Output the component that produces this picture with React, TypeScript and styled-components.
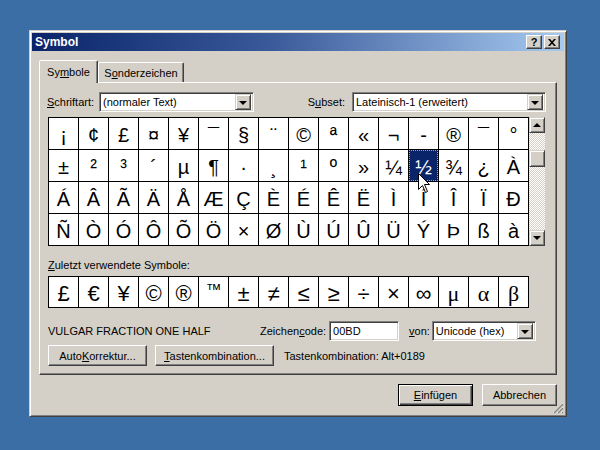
import React, { FC } from "react";
import styled, { createGlobalStyle } from "styled-components";

const GlobalStyle = createGlobalStyle`
  html, body {
    margin: 0;
    padding: 0;
  }
  body {
    width: 600px;
    height: 450px;
    overflow: hidden;
    background: #3a6ea5;
    font-family: "Liberation Sans", Arial, sans-serif;
    font-size: 11px;
    color: #000;
  }
`;

const Desktop = styled.div`
  position: relative;
  width: 600px;
  height: 450px;
  box-sizing: border-box;
  padding: 30px 0 0 29px;
`;

const Window = styled.div`
  position: relative;
  width: 538px;
  height: 387px;
  box-sizing: border-box;
  background: #d4d0c8;
  border: 1px solid;
  border-color: #d4d0c8 #404040 #404040 #d4d0c8;
  box-shadow: inset 1px 1px #fff, inset -1px -1px #808080;
  padding: 2px;
  display: flex;
  flex-direction: column;
`;

const TitleBar = styled.div`
  height: 18px;
  flex-shrink: 0;
  display: flex;
  align-items: center;
  padding: 0 4px 0 3px;
  background: linear-gradient(to right, #0a246a 0%, #3a5a9a 45%, #a6caf0 100%);
  color: #fff;
  font-weight: bold;
  font-size: 12px;
`;

const TitleText = styled.span`
  flex: 1;
`;

const CaptionButton = styled.span`
  width: 16px;
  height: 14px;
  box-sizing: border-box;
  margin-left: 2px;
  background: #d4d0c8;
  border: 1px solid;
  border-color: #fff #404040 #404040 #fff;
  box-shadow: inset -1px -1px #808080;
  display: flex;
  align-items: center;
  justify-content: center;
  color: #000;
  font-size: 11px;
  font-weight: bold;
  line-height: 1;
`;

const Body = styled.div`
  flex: 1;
  display: flex;
  flex-direction: column;
  padding: 9px 7px 0 7px;
`;

const TabStrip = styled.div`
  height: 22px;
  display: flex;
  align-items: flex-end;
`;

const Tab = styled.div<{ $active?: boolean; $w: number }>`
  position: relative;
  z-index: ${(p) => (p.$active ? 1 : 0)};
  width: ${(p) => p.$w}px;
  height: ${(p) => (p.$active ? 23 : 20)}px;
  margin-bottom: ${(p) => (p.$active ? -1 : 0)}px;
  box-sizing: border-box;
  background: #d4d0c8;
  border: 1px solid;
  border-bottom: none;
  border-color: #fff #404040 transparent #fff;
  border-radius: 2px 2px 0 0;
  box-shadow: inset -1px 0 #808080;
  display: flex;
  align-items: center;
  justify-content: center;
  padding-top: ${(p) => (p.$active ? 0 : 1)}px;
`;

const Panel = styled.div`
  height: 293px;
  box-sizing: border-box;
  border: 1px solid;
  border-color: #fff #404040 #404040 #fff;
  box-shadow: inset -1px -1px #808080;
  padding: 9px 10px 0 8px;
  display: flex;
  flex-direction: column;
`;

const Row = styled.div<{ $mt?: number; $h?: number }>`
  display: flex;
  align-items: center;
  height: ${(p) => p.$h ?? 20}px;
  margin-top: ${(p) => p.$mt ?? 0}px;
`;

const Label = styled.span<{ $w?: number; $ml?: number; $mr?: number }>`
  width: ${(p) => (p.$w ? `${p.$w}px` : "auto")};
  margin-left: ${(p) => p.$ml ?? 0}px;
  margin-right: ${(p) => p.$mr ?? 0}px;
  white-space: nowrap;
  flex-shrink: 0;
`;

const Spacer = styled.span`
  flex: 1;
`;

const U = styled.span`
  text-decoration: underline;
`;

const Field = styled.div<{ $w: number }>`
  width: ${(p) => p.$w}px;
  height: 20px;
  flex-shrink: 0;
  box-sizing: border-box;
  background: #fff;
  border: 1px solid;
  border-color: #808080 #fff #fff #808080;
  box-shadow: inset 1px 1px #404040, inset -1px -1px #d4d0c8;
  display: flex;
  align-items: center;
  padding: 2px 2px 2px 3px;
  white-space: nowrap;
  overflow: hidden;
`;

const DropButton = styled.span`
  margin-left: auto;
  width: 16px;
  height: 16px;
  flex-shrink: 0;
  box-sizing: border-box;
  background: #d4d0c8;
  border: 1px solid;
  border-color: #d4d0c8 #404040 #404040 #d4d0c8;
  box-shadow: inset 1px 1px #fff, inset -1px -1px #808080;
  display: flex;
  align-items: center;
  justify-content: center;
  &::after {
    content: "";
    border-left: 4px solid transparent;
    border-right: 4px solid transparent;
    border-top: 4px solid #000;
    margin-top: 1px;
  }
`;

const GridFrame = styled.div`
  display: flex;
  margin-top: 5px;
`;

const CharGrid = styled.div<{ $rows: number }>`
  display: grid;
  grid-template-columns: repeat(16, 29px);
  grid-template-rows: repeat(${(p) => p.$rows}, ${(p) => (p.$rows > 1 ? 31 : 30)}px);
  gap: 1px;
  background: #000;
  border: 1px solid #000;
`;

const Cell = styled.div<{ $selected?: boolean; $serif?: boolean; $size?: number }>`
  background: ${(p) => (p.$selected ? "#0a246a" : "#fff")};
  color: ${(p) => (p.$selected ? "#fff" : "#000")};
  outline: ${(p) => (p.$selected ? "1px dotted #9aa6c8" : "none")};
  outline-offset: -1px;
  display: flex;
  align-items: center;
  justify-content: center;
  padding-top: 3px;
  box-sizing: border-box;
  font-family: ${(p) =>
    p.$serif ? '"Liberation Serif", "Times New Roman", serif' : '"Liberation Sans", Arial, sans-serif'};
  font-size: ${(p) => p.$size ?? 20}px;
  line-height: 1;
`;

const Scrollbar = styled.div`
  width: 16px;
  display: flex;
  flex-direction: column;
  background: repeating-conic-gradient(#d4d0c8 0 25%, #fff 0 50%) 0 0 / 2px 2px;
`;

const ScrollButton = styled.div<{ $down?: boolean }>`
  width: 16px;
  height: 16px;
  box-sizing: border-box;
  background: #d4d0c8;
  border: 1px solid;
  border-color: #d4d0c8 #404040 #404040 #d4d0c8;
  box-shadow: inset 1px 1px #fff, inset -1px -1px #808080;
  display: flex;
  align-items: center;
  justify-content: center;
  margin-top: ${(p) => (p.$down ? "auto" : "0")};
  &::after {
    content: "";
    border-left: 4px solid transparent;
    border-right: 4px solid transparent;
    ${(p) => (p.$down ? "border-top: 4px solid #000;" : "border-bottom: 4px solid #000;")}
  }
`;

const Thumb = styled.div`
  width: 16px;
  height: 17px;
  margin-top: 17px;
  box-sizing: border-box;
  background: #d4d0c8;
  border: 1px solid;
  border-color: #d4d0c8 #404040 #404040 #d4d0c8;
  box-shadow: inset 1px 1px #fff, inset -1px -1px #808080;
`;

const SectionLabel = styled.div`
  margin-top: 13px;
  line-height: 13px;
  height: 13px;
`;

const RecentRow = styled.div`
  display: flex;
  margin-top: 4px;
`;

const Button = styled.button<{ $w: number; $h?: number; $default?: boolean }>`
  width: ${(p) => p.$w}px;
  height: ${(p) => p.$h ?? 21}px;
  flex-shrink: 0;
  box-sizing: border-box;
  padding: 0;
  font: inherit;
  color: #000;
  background: #d4d0c8;
  border: 1px solid;
  border-color: ${(p) => (p.$default ? "#000" : "#fff #404040 #404040 #fff")};
  box-shadow: ${(p) =>
    p.$default
      ? "inset 1px 1px #fff, inset -1px -1px #404040, inset -2px -2px #808080"
      : "inset -1px -1px #808080"};
`;

const Footer = styled.div`
  display: flex;
  justify-content: flex-end;
  gap: 9px;
  margin-top: 9px;
`;

const Grip = styled.svg`
  position: absolute;
  right: 2px;
  bottom: 2px;
`;

const Cursor = styled.svg`
  position: absolute;
  left: 418px;
  top: 173px;
`;

const rows = [
  ["¡", "¢", "£", "¤", "¥", "¯", "§", "¨", "©", "ª", "«", "¬", "-", "®", "¯", "°"],
  ["±", "²", "³", "´", "µ", "¶", "·", "¸", "¹", "º", "»", "¼", "½", "¾", "¿", "À"],
  ["Á", "Â", "Ã", "Ä", "Å", "Æ", "Ç", "È", "É", "Ê", "Ë", "Ì", "Í", "Î", "Ï", "Ð"],
  ["Ñ", "Ò", "Ó", "Ô", "Õ", "Ö", "×", "Ø", "Ù", "Ú", "Û", "Ü", "Ý", "Þ", "ß", "à"],
];

const recent = ["£", "€", "¥", "©", "®", "™", "±", "≠", "≤", "≥", "÷", "×", "∞", "μ", "α", "β"];
const serifRecent = ["μ", "α", "β"];

const App: FC = () => {
  return (
    <Desktop>
      <GlobalStyle />
      <Window>
        <TitleBar>
          <TitleText>Symbol</TitleText>
          <CaptionButton>?</CaptionButton>
          <CaptionButton>
            <svg width="8" height="7" viewBox="0 0 8 7">
              <path d="M0 0h2l2 2.2L6 0h2L5 3.5 8 7H6L4 4.8 2 7H0l3-3.5z" fill="#000" />
            </svg>
          </CaptionButton>
        </TitleBar>
        <Body>
          <TabStrip>
            <Tab $active $w={59}>
              <span>
                Sy<U>m</U>bole
              </span>
            </Tab>
            <Tab $w={86}>
              <span>
                S<U>o</U>nderzeichen
              </span>
            </Tab>
          </TabStrip>
          <Panel>
            <Row>
              <Label $w={52} $ml={-1}>
                <U>S</U>chriftart:
              </Label>
              <Field $w={155}>
                (normaler Text)
                <DropButton />
              </Field>
              <Spacer />
              <Label $mr={7}>
                S<U>u</U>bset:
              </Label>
              <Field $w={194}>
                Lateinisch-1 (erweitert)
                <DropButton />
              </Field>
            </Row>

            <GridFrame>
              <CharGrid $rows={4}>
                {rows.map((r, ri) =>
                  r.map((ch, ci) => (
                    <Cell key={`${ri}-${ci}`} $selected={ri === 1 && ci === 12}>
                      {ch}
                    </Cell>
                  ))
                )}
              </CharGrid>
              <Scrollbar>
                <ScrollButton />
                <Thumb />
                <ScrollButton $down />
              </Scrollbar>
            </GridFrame>

            <SectionLabel>
              <U>Z</U>uletzt verwendete Symbole:
            </SectionLabel>
            <RecentRow>
              <CharGrid $rows={1}>
                {recent.map((ch, i) => (
                  <Cell key={i} $serif={serifRecent.includes(ch)} $size={ch === "™" ? 16 : 22}>
                    {ch === "™" ? <span style={{ marginTop: -8 }}>{ch}</span> : ch}
                  </Cell>
                ))}
              </CharGrid>
            </RecentRow>

            <Row $mt={13}>
              <Label $w={212}>VULGAR FRACTION ONE HALF</Label>
              <Label $mr={3}>
                Zeichen<U>c</U>ode:
              </Label>
              <Field $w={70}>00BD</Field>
              <Label $ml={10} $mr={2}>
                <U>v</U>on:
              </Label>
              <Field $w={104}>
                Unicode (hex)
                <DropButton />
              </Field>
            </Row>

            <Row $mt={4} $h={21}>
              <Button $w={99}>
                Auto<U>K</U>orrektur...
              </Button>
              <Button $w={119} style={{ marginLeft: 8 }}>
                <U>T</U>astenkombination...
              </Button>
              <Label $ml={10}>Tastenkombination: Alt+0189</Label>
            </Row>
          </Panel>

          <Footer>
            <Button $w={75} $h={22} $default>
              <U>E</U>infügen
            </Button>
            <Button $w={75} $h={22}>
              Abbrechen
            </Button>
          </Footer>
        </Body>
        <Grip width="12" height="12" viewBox="0 0 12 12">
          <path d="M11 1L1 11M11 5L5 11M11 9L9 11" stroke="#fff" strokeWidth="1" />
          <path d="M11 2L2 11M11 6L6 11M11 10L10 11" stroke="#808080" strokeWidth="1.4" />
        </Grip>
      </Window>
      <Cursor width="13" height="21" viewBox="0 0 13 21">
        <path
          d="M0.5 0.5 L0.5 16.5 L4.5 12.5 L7.5 19.5 L9.5 18.5 L6.5 11.5 L11.5 11.5 Z"
          fill="#fff"
          stroke="#000"
          strokeWidth="1"
        />
      </Cursor>
    </Desktop>
  );
};

export default App;
